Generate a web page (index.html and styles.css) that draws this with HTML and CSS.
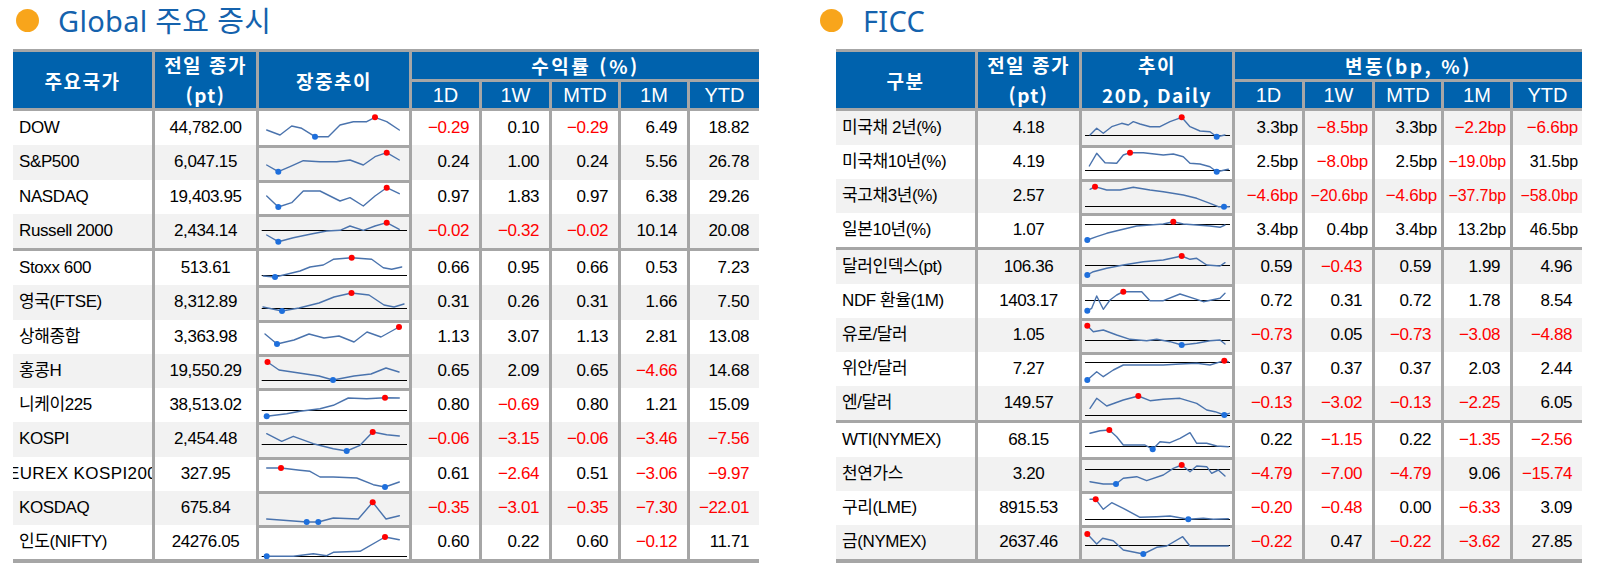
FILE: index.html
```html
<!DOCTYPE html>
<html lang="ko">
<head>
<meta charset="utf-8">
<title>Global 주요 증시 / FICC</title>
<link rel="stylesheet" href="styles.css">
</head>
<body>
<div class="page">
  <section class="panel panel-l">
    <div class="title"><span class="dot"></span><h2>Global 주요 증시</h2></div>
    <div class="tbl tbl-l">
      <div class="head">
        <div class="h span2">주요국가</div>
        <div class="h span2 two"><span>전일 종가</span><span>(pt)</span></div>
        <div class="h span2">장중추이</div>
        <div class="h grp-h">수익률 (%)</div>
        <div class="h sub">1D</div><div class="h sub">1W</div><div class="h sub">MTD</div><div class="h sub">1M</div><div class="h sub">YTD</div>
      </div>
      <div class="grp">
        <div class="row">
          <div class="c nm">DOW</div><div class="c val">44,782.00</div>
          <div class="c spk"><svg viewBox="0 0 150 34"><polyline points="7.7,19 21,24 32.7,15 42.7,17.3 56,25.7 69.3,25.7 81,14 94.3,10.7 107.7,10.7 116,6.3 127.7,10.7 140.3,19"/><circle class="mx" cx="116" cy="6.3" r="3"/><circle class="mn" cx="56" cy="25.7" r="3"/></svg></div>
          <div class="c num neg">−0.29</div><div class="c num">0.10</div><div class="c num neg">−0.29</div><div class="c num">6.49</div><div class="c num">18.82</div>
        </div>
        <div class="row alt">
          <div class="c nm">S&amp;P500</div><div class="c val">6,047.15</div>
          <div class="c spk b"><svg viewBox="0 0 150 34"><polyline points="7.7,20 19.3,26.7 31,21.7 44.3,15.7 61,16.7 77.7,16.7 91,15 104.3,20 116,11.7 127.7,7.7 140.3,15"/><circle class="mx" cx="127.7" cy="7.7" r="3"/><circle class="mn" cx="19.3" cy="26.7" r="3"/></svg></div>
          <div class="c num">0.24</div><div class="c num">1.00</div><div class="c num">0.24</div><div class="c num">5.56</div><div class="c num">26.78</div>
        </div>
        <div class="row">
          <div class="c nm">NASDAQ</div><div class="c val">19,403.95</div>
          <div class="c spk b"><svg viewBox="0 0 150 34"><polyline points="7.7,16 19.3,27 32.7,22.7 44.3,11 61,11 81,21 91,17.7 104.3,26 116,16 127.7,7.7 140.3,13.7"/><circle class="mx" cx="127.7" cy="7.7" r="3"/><circle class="mn" cx="19.3" cy="27" r="3"/></svg></div>
          <div class="c num">0.97</div><div class="c num">1.83</div><div class="c num">0.97</div><div class="c num">6.38</div><div class="c num">29.26</div>
        </div>
        <div class="row alt">
          <div class="c nm">Russell 2000</div><div class="c val">2,434.14</div>
          <div class="c spk b"><svg viewBox="0 0 150 34"><line class="base" x1="2.7" y1="16.5" x2="148" y2="16.5"/><polyline points="7.7,21 19.3,27.7 34.3,23.7 51,20.3 67.7,17 81,16.3 91,12 104.3,16.3 116,12 127.7,8.7 140.3,15.3"/><circle class="mx" cx="127.7" cy="8.7" r="3"/><circle class="mn" cx="19.3" cy="27.7" r="3"/></svg></div>
          <div class="c num neg">−0.02</div><div class="c num neg">−0.32</div><div class="c num neg">−0.02</div><div class="c num">10.14</div><div class="c num">20.08</div>
        </div>
      </div>
      <div class="grp">
        <div class="row">
          <div class="c nm">Stoxx 600</div><div class="c val">513.61</div>
          <div class="c spk"><svg viewBox="0 0 150 34"><line class="base" x1="2.7" y1="24.5" x2="148" y2="24.5"/><polyline points="4.3,25 16,26 27.7,23.3 41,20 51,16 64.3,14 74.3,8.3 92.7,6.7 112.7,8.3 124.3,16.7 132.7,18.3 142.7,16"/><circle class="mx" cx="92.7" cy="6.7" r="3"/><circle class="mn" cx="16" cy="26" r="3"/></svg></div>
          <div class="c num">0.66</div><div class="c num">0.95</div><div class="c num">0.66</div><div class="c num">0.53</div><div class="c num">7.23</div>
        </div>
        <div class="row alt">
          <div class="c nm">영국(FTSE)</div><div class="c val">8,312.89</div>
          <div class="c spk b"><svg viewBox="0 0 150 34"><line class="base" x1="2.7" y1="23.5" x2="148" y2="23.5"/><polyline points="4,22 23,26 40,23 60,18 75,12 92.5,8 110,10 125,20 135,22 145,19"/><circle class="mx" cx="92.5" cy="8" r="3"/><circle class="mn" cx="23" cy="26" r="3"/></svg></div>
          <div class="c num">0.31</div><div class="c num">0.26</div><div class="c num">0.31</div><div class="c num">1.66</div><div class="c num">7.50</div>
        </div>
        <div class="row">
          <div class="c nm">상해종합</div><div class="c val">3,363.98</div>
          <div class="c spk b"><svg viewBox="0 0 150 34"><polyline points="6,14 18,24 35,20 50,14 65,18 80,16 95,22 108,12 122,17 140,7"/><circle class="mx" cx="140" cy="7" r="3"/><circle class="mn" cx="18" cy="24" r="3"/></svg></div>
          <div class="c num">1.13</div><div class="c num">3.07</div><div class="c num">1.13</div><div class="c num">2.81</div><div class="c num">13.08</div>
        </div>
        <div class="row alt">
          <div class="c nm">홍콩H</div><div class="c val">19,550.29</div>
          <div class="c spk b"><svg viewBox="0 0 150 34"><line class="base" x1="2.7" y1="26.5" x2="148" y2="26.5"/><polyline points="8.5,8 20,16 40,19 60,22 74,26 95,22 112,20 127,14 140,18"/><circle class="mx" cx="8.5" cy="8" r="3"/><circle class="mn" cx="74" cy="26" r="3"/></svg></div>
          <div class="c num">0.65</div><div class="c num">2.09</div><div class="c num">0.65</div><div class="c num neg">−4.66</div><div class="c num">14.68</div>
        </div>
        <div class="row">
          <div class="c nm">니케이225</div><div class="c val">38,513.02</div>
          <div class="c spk b"><svg viewBox="0 0 150 34"><line class="base" x1="2.7" y1="22.5" x2="148" y2="22.5"/><polyline points="7.7,28.3 27.7,25.7 41,23.3 61,20.7 74.3,17.3 89.3,10 107.7,10.7 126,9.7 140.3,10"/><circle class="mx" cx="126" cy="9.7" r="3"/><circle class="mn" cx="7.7" cy="28.3" r="3"/></svg></div>
          <div class="c num">0.80</div><div class="c num neg">−0.69</div><div class="c num">0.80</div><div class="c num">1.21</div><div class="c num">15.09</div>
        </div>
        <div class="row alt">
          <div class="c nm">KOSPI</div><div class="c val">2,454.48</div>
          <div class="c spk b"><svg viewBox="0 0 150 34"><line class="base" x1="2.7" y1="22.5" x2="148" y2="22.5"/><polyline points="7.7,11.7 22.7,19.3 34.3,14.3 54.3,21.7 74.3,26.7 87.7,29 101,23.3 113.7,10 127.7,12.7 140.3,14"/><circle class="mx" cx="113.7" cy="10" r="3"/><circle class="mn" cx="87.7" cy="29" r="3"/></svg></div>
          <div class="c num neg">−0.06</div><div class="c num neg">−3.15</div><div class="c num neg">−0.06</div><div class="c num neg">−3.46</div><div class="c num neg">−7.56</div>
        </div>
        <div class="row">
          <div class="c nm clip"><span>EUREX KOSPI200</span></div><div class="c val">327.95</div>
          <div class="c spk b"><svg viewBox="0 0 150 34"><polyline points="7.7,11 22,11 41,13.3 51,14.3 61,20 74.3,20 97.7,21 114.3,27.7 126,30 140.3,25"/><circle class="mx" cx="22" cy="11" r="3"/><circle class="mn" cx="126" cy="30" r="3"/></svg></div>
          <div class="c num">0.61</div><div class="c num neg">−2.64</div><div class="c num">0.51</div><div class="c num neg">−3.06</div><div class="c num neg">−9.97</div>
        </div>
        <div class="row alt">
          <div class="c nm">KOSDAQ</div><div class="c val">675.84</div>
          <div class="c spk b"><svg viewBox="0 0 150 34"><polyline points="7.7,28 47.7,31 59.3,31 74.3,27 99.3,28 113.7,11.3 127,28 140.3,24.7"/><circle class="mx" cx="113.7" cy="11.3" r="3"/><circle class="mn" cx="47.7" cy="31" r="3"/><circle class="mn" cx="59.3" cy="31" r="3"/></svg></div>
          <div class="c num neg">−0.35</div><div class="c num neg">−3.01</div><div class="c num neg">−0.35</div><div class="c num neg">−7.30</div><div class="c num neg">−22.01</div>
        </div>
        <div class="row">
          <div class="c nm">인도(NIFTY)</div><div class="c val">24276.05</div>
          <div class="c spk b"><svg viewBox="0 0 150 34"><line class="base" x1="2.7" y1="31.5" x2="148" y2="31.5"/><polyline points="7.7,31.3 34.3,31.3 54.3,28.7 67.7,30.7 74.3,27.3 101,26.3 126,12 140.3,14.7"/><circle class="mx" cx="126" cy="12" r="3"/><circle class="mn" cx="7.7" cy="31.3" r="3"/></svg></div>
          <div class="c num">0.60</div><div class="c num">0.22</div><div class="c num">0.60</div><div class="c num neg">−0.12</div><div class="c num">11.71</div>
        </div>
      </div>
    </div>
  </section>

  <section class="panel panel-r">
    <div class="title"><span class="dot"></span><h2>FICC</h2></div>
    <div class="tbl">
      <div class="head">
        <div class="h span2">구분</div>
        <div class="h span2 two"><span>전일 종가</span><span>(pt)</span></div>
        <div class="h span2 two"><span>추이</span><span>20D, Daily</span></div>
        <div class="h grp-h">변동(bp, %)</div>
        <div class="h sub">1D</div><div class="h sub">1W</div><div class="h sub">MTD</div><div class="h sub">1M</div><div class="h sub">YTD</div>
      </div>
      <div class="grp">
        <div class="row alt">
          <div class="c nm">미국채 2년(%)</div><div class="c val">4.18</div>
          <div class="c spk"><svg viewBox="0 0 150 34"><line class="base" x1="3" y1="24.5" x2="148" y2="24.5"/><polyline points="8,24 14.7,17.3 21.3,22.3 29.7,15.7 39.7,12.3 46.3,14 51.3,10.7 58,13 68,15.7 78,15.7 88,10.7 99.7,6.3 108,15.7 118,20 128,20.7 134.7,25.7 143,24"/><circle class="mx" cx="99.7" cy="6.3" r="3"/><circle class="mn" cx="134.7" cy="25.7" r="3"/></svg></div>
          <div class="c num bp">3.3bp</div><div class="c num bp neg">−8.5bp</div><div class="c num bp">3.3bp</div><div class="c num bp neg">−2.2bp</div><div class="c num bp neg">−6.6bp</div>
        </div>
        <div class="row">
          <div class="c nm">미국채10년(%)</div><div class="c val">4.19</div>
          <div class="c spk b"><svg viewBox="0 0 150 34"><line class="base" x1="3" y1="25.5" x2="148" y2="25.5"/><polyline points="7.3,21 14.7,8.3 23,17.7 34.7,18.3 41.3,10 48,7.7 61.3,7.7 81.3,10 91.3,9 101.3,11.7 108,18.3 118,19 128,21.7 134.7,26.7 146.3,24.3"/><circle class="mx" cx="48" cy="7.7" r="3"/><circle class="mn" cx="134.7" cy="26.7" r="3"/></svg></div>
          <div class="c num bp">2.5bp</div><div class="c num bp neg">−8.0bp</div><div class="c num bp">2.5bp</div><div class="c num bp sm neg">−19.0bp</div><div class="c num bp sm">31.5bp</div>
        </div>
        <div class="row alt">
          <div class="c nm">국고채3년(%)</div><div class="c val">2.57</div>
          <div class="c spk b"><svg viewBox="0 0 150 34"><line class="base" x1="3" y1="27.5" x2="148" y2="27.5"/><polyline points="8,10.3 13,7.7 24.7,11 38,11 51.3,8.3 68,11 81.3,12.7 101.3,16 114.7,19.3 128,24.3 136.3,27.7 142,27.7 147.3,27.7"/><circle class="mx" cx="13" cy="7.7" r="3"/><circle class="mn" cx="142" cy="27.7" r="3"/></svg></div>
          <div class="c num bp neg">−4.6bp</div><div class="c num bp sm neg">−20.6bp</div><div class="c num bp neg">−4.6bp</div><div class="c num bp sm neg">−37.7bp</div><div class="c num bp sm neg">−58.0bp</div>
        </div>
        <div class="row">
          <div class="c nm">일본10년(%)</div><div class="c val">1.07</div>
          <div class="c spk b"><svg viewBox="0 0 150 34"><line class="base" x1="3" y1="11.5" x2="148" y2="11.5"/><polyline points="5.3,27 14.7,23.7 24.7,20.3 38,17 54.7,13 68,12 81.3,11 91.3,8.7 101.3,11 114.7,12 128,13 138,14.3 143,12"/><circle class="mx" cx="91.3" cy="8.7" r="3"/><circle class="mn" cx="5.3" cy="27" r="3"/></svg></div>
          <div class="c num bp">3.4bp</div><div class="c num bp">0.4bp</div><div class="c num bp">3.4bp</div><div class="c num bp sm">13.2bp</div><div class="c num bp sm">46.5bp</div>
        </div>
      </div>
      <div class="grp">
        <div class="row alt">
          <div class="c nm">달러인덱스(pt)</div><div class="c val">106.36</div>
          <div class="c spk"><svg viewBox="0 0 150 34"><line class="base" x1="3" y1="15.5" x2="148" y2="15.5"/><polyline points="5.3,25 11.3,21.7 24.7,18.3 41.3,15 61.3,11.7 81.3,10 99.7,6 108,9.3 114.7,8.3 124.7,15 138,16 143,12.7"/><circle class="mx" cx="99.7" cy="6" r="3"/><circle class="mn" cx="5.3" cy="25" r="3"/></svg></div>
          <div class="c num">0.59</div><div class="c num neg">−0.43</div><div class="c num">0.59</div><div class="c num">1.99</div><div class="c num">4.96</div>
        </div>
        <div class="row">
          <div class="c nm">NDF 환율(1M)</div><div class="c val">1403.17</div>
          <div class="c spk b"><svg viewBox="0 0 150 34"><line class="base" x1="3" y1="16.5" x2="148" y2="16.5"/><polyline points="5.3,26.7 9.7,24.3 14.7,12 21.3,25.3 28,16 34.7,11 41.3,7.7 59.7,7.7 68,16.7 81.3,16.7 98,10 114.7,15.3 121.3,17.7 138,14.3 143,9.3"/><circle class="mx" cx="41.3" cy="7.7" r="3"/><circle class="mn" cx="5.3" cy="26.7" r="3"/></svg></div>
          <div class="c num">0.72</div><div class="c num">0.31</div><div class="c num">0.72</div><div class="c num">1.78</div><div class="c num">8.54</div>
        </div>
        <div class="row alt">
          <div class="c nm">유로/달러</div><div class="c val">1.05</div>
          <div class="c spk b"><svg viewBox="0 0 150 34"><line class="base" x1="3" y1="22.5" x2="148" y2="22.5"/><polyline points="5.3,7.7 11.3,13.7 21.3,12 34.7,17 48,21.3 64.7,22.7 74.7,21.3 88,23.7 99.7,27 114.7,25.3 128,22.7 138,22 143,26"/><circle class="mx" cx="5.3" cy="7.7" r="3"/><circle class="mn" cx="99.7" cy="27" r="3"/></svg></div>
          <div class="c num neg">−0.73</div><div class="c num">0.05</div><div class="c num neg">−0.73</div><div class="c num neg">−3.08</div><div class="c num neg">−4.88</div>
        </div>
        <div class="row">
          <div class="c nm">위안/달러</div><div class="c val">7.27</div>
          <div class="c spk b"><svg viewBox="0 0 150 34"><line class="base" x1="3" y1="10.5" x2="148" y2="10.5"/><polyline points="5.3,28 14.7,19.7 21.3,24.7 31.3,18 41.3,13 64.7,13 81.3,13 98,12 114.7,11.3 128,13 142.3,8.7 146.3,9.7"/><circle class="mx" cx="142.3" cy="8.7" r="3"/><circle class="mn" cx="5.3" cy="28" r="3"/></svg></div>
          <div class="c num">0.37</div><div class="c num">0.37</div><div class="c num">0.37</div><div class="c num">2.03</div><div class="c num">2.44</div>
        </div>
        <div class="row alt">
          <div class="c nm">엔/달러</div><div class="c val">149.57</div>
          <div class="c spk b"><svg viewBox="0 0 150 34"><line class="base" x1="3" y1="29.5" x2="148" y2="29.5"/><polyline points="8,22.3 14.7,12.3 24.7,20 41.3,14 56.3,10 68,14.7 81.3,13.3 98,12.3 114.7,17.3 124.7,24 133,25.7 142.3,29 147.3,27.3"/><circle class="mx" cx="56.3" cy="10" r="3"/><circle class="mn" cx="142.3" cy="29" r="3"/></svg></div>
          <div class="c num neg">−0.13</div><div class="c num neg">−3.02</div><div class="c num neg">−0.13</div><div class="c num neg">−2.25</div><div class="c num">6.05</div>
        </div>
      </div>
      <div class="grp">
        <div class="row">
          <div class="c nm">WTI(NYMEX)</div><div class="c val">68.15</div>
          <div class="c spk"><svg viewBox="0 0 150 34"><line class="base" x1="3" y1="23.5" x2="148" y2="23.5"/><polyline points="8,10.3 18,7.7 27.3,7 34.7,13.7 41.3,22 54.7,22 63,22 70.7,26.3 78,18.7 88,19.7 98,15.3 108,9.7 114.7,20.3 124.7,20.3 134.7,23 146.3,23.7"/><circle class="mx" cx="27.3" cy="7" r="3"/><circle class="mn" cx="70.7" cy="26.3" r="3"/></svg></div>
          <div class="c num">0.22</div><div class="c num neg">−1.15</div><div class="c num">0.22</div><div class="c num neg">−1.35</div><div class="c num neg">−2.56</div>
        </div>
        <div class="row alt">
          <div class="c nm">천연가스</div><div class="c val">3.20</div>
          <div class="c spk b"><svg viewBox="0 0 150 34"><line class="base" x1="3" y1="12.5" x2="148" y2="12.5"/><polyline points="8,24.7 21.3,27 34,27 41.3,21.3 54.7,19.7 64.7,23.7 81.3,18 91.3,11.3 99.7,8 108,14.7 114.7,9 124.7,9.7 129.7,16.3 136.3,13 143,19"/><circle class="mx" cx="99.7" cy="8" r="3"/><circle class="mn" cx="34" cy="27" r="3"/></svg></div>
          <div class="c num neg">−4.79</div><div class="c num neg">−7.00</div><div class="c num neg">−4.79</div><div class="c num">9.06</div><div class="c num neg">−15.74</div>
        </div>
        <div class="row">
          <div class="c nm">구리(LME)</div><div class="c val">8915.53</div>
          <div class="c spk b"><svg viewBox="0 0 150 34"><line class="base" x1="3" y1="28.5" x2="148" y2="28.5"/><polyline points="8,8.3 13.7,8.3 21.3,18.3 29.7,11.7 41.3,17.3 58,26.3 74.7,25.7 88,25 106.3,28.3 121.3,27.3 131.3,28.3 146.3,27.7"/><circle class="mx" cx="13.7" cy="8.3" r="3"/><circle class="mn" cx="106.3" cy="28.3" r="3"/></svg></div>
          <div class="c num neg">−0.20</div><div class="c num neg">−0.48</div><div class="c num">0.00</div><div class="c num neg">−6.33</div><div class="c num">3.09</div>
        </div>
        <div class="row alt">
          <div class="c nm">금(NYMEX)</div><div class="c val">2637.46</div>
          <div class="c spk b"><svg viewBox="0 0 150 34"><line class="base" x1="3" y1="20.5" x2="148" y2="20.5"/><polyline points="5.3,9 14.7,19 20.7,13.3 31.3,15.7 41.3,25 61.3,29 74.7,22.3 84.7,21 100.7,11.7 108,21 146.3,21"/><circle class="mx" cx="5.3" cy="9" r="3"/><circle class="mn" cx="61.3" cy="29" r="3"/></svg></div>
          <div class="c num neg">−0.22</div><div class="c num">0.47</div><div class="c num neg">−0.22</div><div class="c num neg">−3.62</div><div class="c num">27.85</div>
        </div>
      </div>
    </div>
  </section>
</div>
</body>
</html>
```

FILE: styles.css
```css
* { box-sizing: border-box; }

html, body {
  margin: 0;
  padding: 0;
  background: #ffffff;
}

body {
  font-family: "Liberation Sans", "Noto Sans CJK KR", sans-serif;
  color: #000;
}

.page {
  display: flex;
  width: 1607px;
  height: 576px;
}

.panel-l { margin-left: 13px; }
.panel-r { margin-left: 61px; }

.title {
  height: 40px;
  margin-bottom: 9px;
  display: flex;
  align-items: center;
}

.panel-l .title { padding-left: 3px; }
.panel-r .tbl { margin-left: 16px; }

.dot {
  width: 23px;
  height: 23px;
  border-radius: 50%;
  background: #f8a51b;
  margin-right: 19px;
  flex: none;
}

.panel-r .dot { margin-right: 20px; }

.title h2 {
  margin: 0;
  font-family: "Noto Sans", "Noto Sans CJK KR", sans-serif;
  font-weight: 400;
  font-size: 29px;
  line-height: 1;
  color: #1462ad;
  letter-spacing: 0.3px;
}

.tbl {
  --cols: 139px 101px 150px 67px 67px 66px 66px 69px;
  width: 746px;
  background: #a6a6a6;
  padding: 3px 0 4px;
  display: flex;
  flex-direction: column;
  gap: 3px;
}

.head {
  display: grid;
  grid-template-columns: var(--cols);
  grid-template-rows: 27px 26px;
  column-gap: 3px;
  row-gap: 3px;
}

.h {
  background: #0062ad;
  color: #fff;
  display: flex;
  align-items: center;
  justify-content: center;
  font-family: "Noto Sans CJK KR", sans-serif;
  font-weight: 700;
  font-size: 19px;
  letter-spacing: 1.5px;
  line-height: 1;
  white-space: nowrap;
}

.h.span2 { grid-row: 1 / 3; }
.h.grp-h {
  grid-column: 4 / 9;
  letter-spacing: 2.6px;
}

.h.two {
  flex-direction: column;
  line-height: 30px;
}

.h.sub {
  font-family: "Liberation Sans", sans-serif;
  font-weight: 400;
  font-size: 20px;
  letter-spacing: 0;
}

.grp {
  display: flex;
  flex-direction: column;
}

.row {
  display: grid;
  grid-template-columns: var(--cols);
  column-gap: 3px;
  height: 34px;
}

.tbl-l .row { height: 34.25px; }

.c {
  background-color: #ffffff;
  display: flex;
  align-items: center;
  font-size: 17px;
  line-height: 20px;
  letter-spacing: -0.4px;
  white-space: nowrap;
  overflow: hidden;
}

.row.alt .c { background-color: #f2f2f2; }

.nm { padding-left: 6px; }
.nm.clip {
  padding-left: 0;
  justify-content: center;
}
.nm.clip span {
  flex: none;
  letter-spacing: 0.4px;
}

.val { justify-content: center; }

.num {
  justify-content: flex-end;
  padding-right: 10px;
}

.num.bp {
  padding-right: 4px;
  letter-spacing: -0.2px;
}
.num.sm {
  font-size: 16px;
  letter-spacing: -0.1px;
}

.neg { color: #ff0000; }

.spk.b {
  background-image: linear-gradient(to bottom, #a6a6a6 0, #a6a6a6 3px, transparent 3px);
}

.spk svg {
  display: block;
  width: 150px;
  height: 34px;
  overflow: visible;
}

.spk polyline {
  fill: none;
  stroke: #4a73ad;
  stroke-width: 1.4;
  stroke-linejoin: round;
  stroke-linecap: round;
}

.spk .base {
  stroke: #000;
  stroke-width: 1;
}

.spk .mx { fill: #ff0000; }
.spk .mn { fill: #1e6fdc; }
```
